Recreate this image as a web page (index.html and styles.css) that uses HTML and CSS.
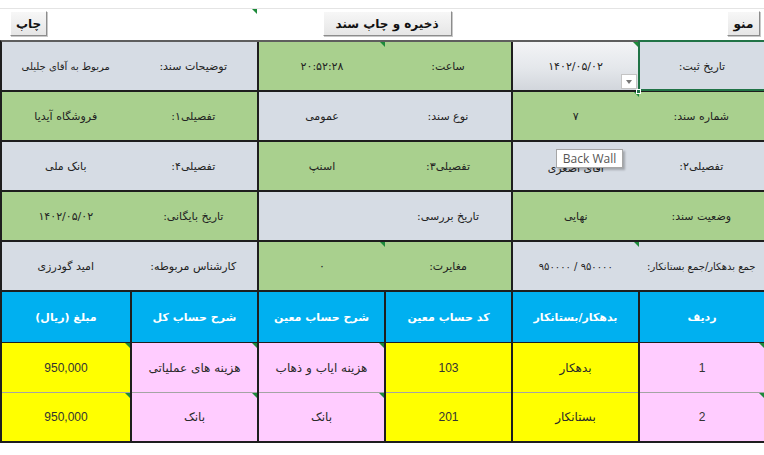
FILE: index.html
```html
<!DOCTYPE html>
<html lang="fa">
<head>
<meta charset="utf-8">
<title>سند حسابداری</title>
<link rel="stylesheet" href="styles.css">
</head>
<body>
<div class="page">
  <div class="toolbar" dir="rtl">
    <button class="btn btn-menu">منو</button>
    <button class="btn btn-save">ذخیره و چاپ سند</button>
    <button class="btn btn-print">چاپ</button>
    <span class="bar-flag"></span>
  </div>

  <div class="sheet" dir="rtl">
    <div class="info">
      <!-- row 1 -->
      <div class="cell gray selected">تاریخ ثبت:<span class="handle"></span></div>
      <div class="cell dropcell flag">۱۴۰۲/۰۵/۰۲<span class="dd"></span></div>
      <div class="block green"><span class="half">ساعت:</span><span class="half flag">۲۰:۵۲:۲۸</span></div>
      <div class="block gray"><span class="half">توضیحات سند:</span><span class="half small">مربوط به آقای جلیلی</span></div>
      <!-- row 2 -->
      <div class="block green"><span class="half">شماره سند:</span><span class="half flag">۷</span></div>
      <div class="block gray"><span class="half">نوع سند:</span><span class="half">عمومی</span></div>
      <div class="block green"><span class="half">تفصیلی۱:</span><span class="half">فروشگاه آیدیا</span></div>
      <!-- row 3 -->
      <div class="block gray"><span class="half">تفصیلی۲:</span><span class="half low">آقای اصغری</span></div>
      <div class="block green"><span class="half">تفصیلی۳:</span><span class="half">اسنپ</span></div>
      <div class="block gray"><span class="half">تفصیلی۴:</span><span class="half">بانک ملی</span></div>
      <!-- row 4 -->
      <div class="block green"><span class="half">وضعیت سند:</span><span class="half">نهایی</span></div>
      <div class="block gray"><span class="half">تاریخ بررسی:</span><span class="half"></span></div>
      <div class="block green"><span class="half">تاریخ بایگانی:</span><span class="half">۱۴۰۲/۰۵/۰۲</span></div>
      <!-- row 5 -->
      <div class="block gray"><span class="half narrow">جمع بدهکار/جمع بستانکار:</span><span class="half flag small">۹۵۰۰۰۰ / ۹۵۰۰۰۰</span></div>
      <div class="block green"><span class="half">مغایرت:</span><span class="half flag">۰</span></div>
      <div class="block gray"><span class="half">کارشناس مربوطه:</span><span class="half">امید گودرزی</span></div>
    </div>

    <div class="ledger">
      <div class="head">ردیف</div>
      <div class="head">بدهکار/بستانکار</div>
      <div class="head">کد حساب معین</div>
      <div class="head">شرح حساب معین</div>
      <div class="head">شرح حساب کل</div>
      <div class="head">مبلغ (ریال)</div>

      <div class="td pink num flag">1</div>
      <div class="td yellow">بدهکار</div>
      <div class="td yellow num">103</div>
      <div class="td pink fa flag">هزینه ایاب و ذهاب</div>
      <div class="td pink fa flag">هزینه های عملیاتی</div>
      <div class="td yellow num flag">950,000</div>

      <div class="td pink num flag second">2</div>
      <div class="td yellow second">بستانکار</div>
      <div class="td yellow num second">201</div>
      <div class="td pink fa flag second">بانک</div>
      <div class="td pink fa flag second">بانک</div>
      <div class="td yellow num flag second">950,000</div>
    </div>
  </div>

  <div class="tooltip">Back Wall</div>
</div>
</body>
</html>
```

FILE: styles.css
```css
* {
  box-sizing: border-box;
  margin: 0;
  padding: 0;
}

html, body {
  background: #ffffff;
}

body {
  width: 764px;
  height: 455px;
  overflow: hidden;
  font-family: "DejaVu Sans", sans-serif;
  color: #222;
}

.page {
  position: relative;
  width: 764px;
  height: 455px;
}

/* ---------- toolbar ---------- */
.toolbar {
  position: relative;
  margin-top: 8px;
  height: 32px;
  border-top: 1px solid #e4e4e4;
  padding: 2px 4px 0 10px;
  display: flex;
  justify-content: space-between;
  align-items: flex-start;
}

.btn {
  height: 25px;
  font-family: "DejaVu Sans", sans-serif;
  font-weight: bold;
  font-size: 12px;
  color: #111;
  background: linear-gradient(#f7f7f7, #e6e6e6);
  border: 1px solid;
  border-color: #ffffff #8c8c8c #8c8c8c #ffffff;
  box-shadow: 1px 1px 0 #c8c8c8;
  display: flex;
  align-items: center;
  justify-content: center;
}

.btn-menu { width: 33px; }
.btn-save { width: 129px; }
.btn-print { width: 37px; }

.bar-flag {
  position: absolute;
  left: 252px;
  top: 0;
  border-top: 5px solid #1d8a3a;
  border-left: 5px solid transparent;
}

/* ---------- sheet ---------- */
.sheet {
  width: 764px;
  background: #1e1e1e;
  border-top: 2px solid #5e5e5e;
  border-left: 2px solid #1e1e1e;
  border-bottom: 2px solid #1e1e1e;
  display: flex;
  flex-direction: column;
  gap: 2px;
}

.info,
.ledger {
  display: grid;
  grid-template-columns: 124px 125px 125px 125px 125px 1fr;
  column-gap: 2px;
}

.info {
  grid-auto-rows: 48px;
  row-gap: 2px;
}

.green { background: #a9d08e; }
.gray { background: #d6dce4; }
.pink { background: #ffccff; }
.yellow { background: #ffff00; }

.cell,
.half {
  position: relative;
  display: flex;
  align-items: center;
  justify-content: center;
  font-size: 11px;
  text-align: center;
}

.block {
  grid-column: span 2;
  display: flex;
}

.half {
  flex: 1;
}

.low { padding-top: 4px; }

.small { font-size: 10px; }
.narrow { font-size: 10px; white-space: nowrap; }

.dropcell {
  background: linear-gradient(180deg, #f3f4f6 0%, #e4e7eb 55%, #d2d6dc 100%);
}

.dd {
  position: absolute;
  right: 1px;
  bottom: 1px;
  width: 16px;
  height: 15px;
  background: #fff;
  border: 1px solid #c4c4c4;
}

.dd::after {
  content: "";
  position: absolute;
  left: 4px;
  top: 5px;
  border-top: 4px solid #777;
  border-left: 3px solid transparent;
  border-right: 3px solid transparent;
}

.selected::before {
  content: "";
  position: absolute;
  top: -2px;
  right: 0;
  bottom: -1px;
  left: -2px;
  border: 2px solid #217346;
  border-right: none;
}

.handle {
  position: absolute;
  left: -4px;
  bottom: -4px;
  width: 5px;
  height: 5px;
  background: #217346;
  border: 1px solid #fff;
  z-index: 2;
}

.flag::after {
  content: "";
  position: absolute;
  top: 0;
  right: 0;
  border-top: 5px solid #1d8a3a;
  border-left: 5px solid transparent;
}

/* ---------- ledger ---------- */
.ledger {
  grid-template-rows: 50px 50px 49px;
  row-gap: 0;
}

.head {
  background: #00b0f0;
  color: #ffffff;
  font-weight: bold;
  font-size: 11px;
  display: flex;
  align-items: center;
  justify-content: center;
}

.td {
  position: relative;
  display: flex;
  align-items: center;
  justify-content: center;
  border-top: 1px solid #1e1e1e;
  font-size: 12px;
  color: #2a2a2a;
}

.td.second {
  border-top-color: #a4a4a4;
}

.num {
  font-family: "Liberation Sans", sans-serif;
  font-size: 12px;
  color: #333;
}

.fa {
  font-size: 12px;
}

/* ---------- tooltip ---------- */
.tooltip {
  position: absolute;
  left: 556px;
  top: 141px;
  width: 67px;
  height: 19px;
  background: #ffffff;
  border: 1px solid #a6a6a6;
  box-shadow: 2px 2px 2px rgba(0, 0, 0, 0.25);
  font-family: "Open Sans", sans-serif;
  font-size: 12px;
  color: #555;
  line-height: 17px;
  text-align: center;
  direction: ltr;
}
```
